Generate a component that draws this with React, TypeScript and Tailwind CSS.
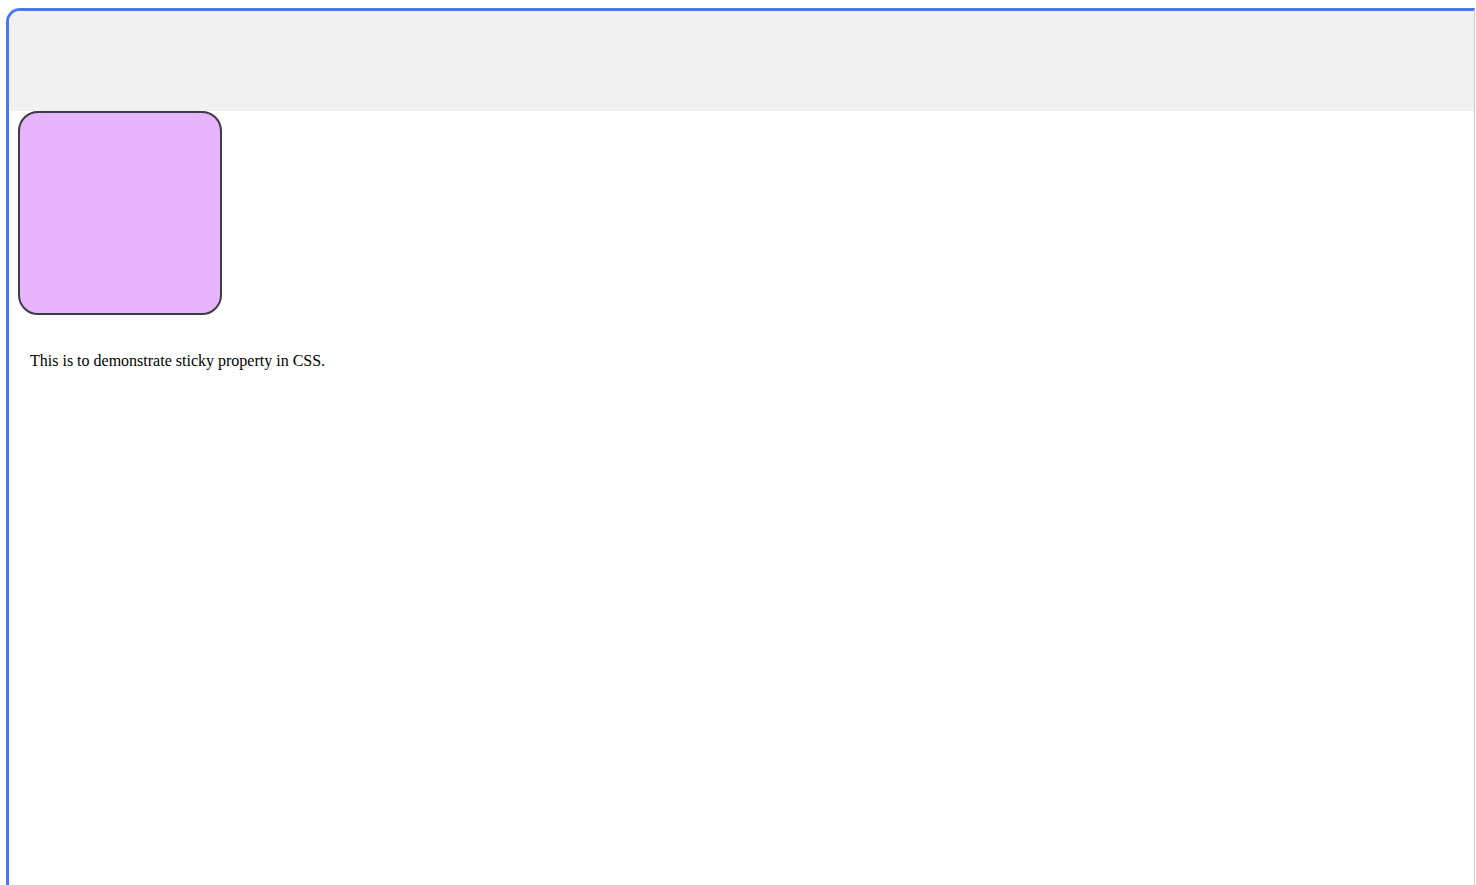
export default function App() {
  return (
    <div className="h-[885px] w-[1476px] overflow-hidden bg-white pl-[6px] pt-[8px]">
      <div className="flex h-full w-[1469px] flex-col overflow-hidden rounded-tl-[14px] border-l-[3px] border-t-[3px] border-r border-l-[#4a78ee] border-t-[#4a78ee] border-r-[#c9c9c9] bg-white">
        {/* sticky header */}
        <div className="h-[100px] shrink-0 bg-[#f1f1f1]" />

        <div className="pl-[9px]">
          <div className="h-[204px] w-[204px] rounded-[20px] border-2 border-[#3c3c44] bg-[#e6b3fc]" />
        </div>

        <p className="mt-[37px] pl-[21px] font-['Liberation_Serif',serif] text-[16px] leading-[18px] text-black">
          This is to demonstrate sticky property in CSS.
        </p>
      </div>
    </div>
  );
}
